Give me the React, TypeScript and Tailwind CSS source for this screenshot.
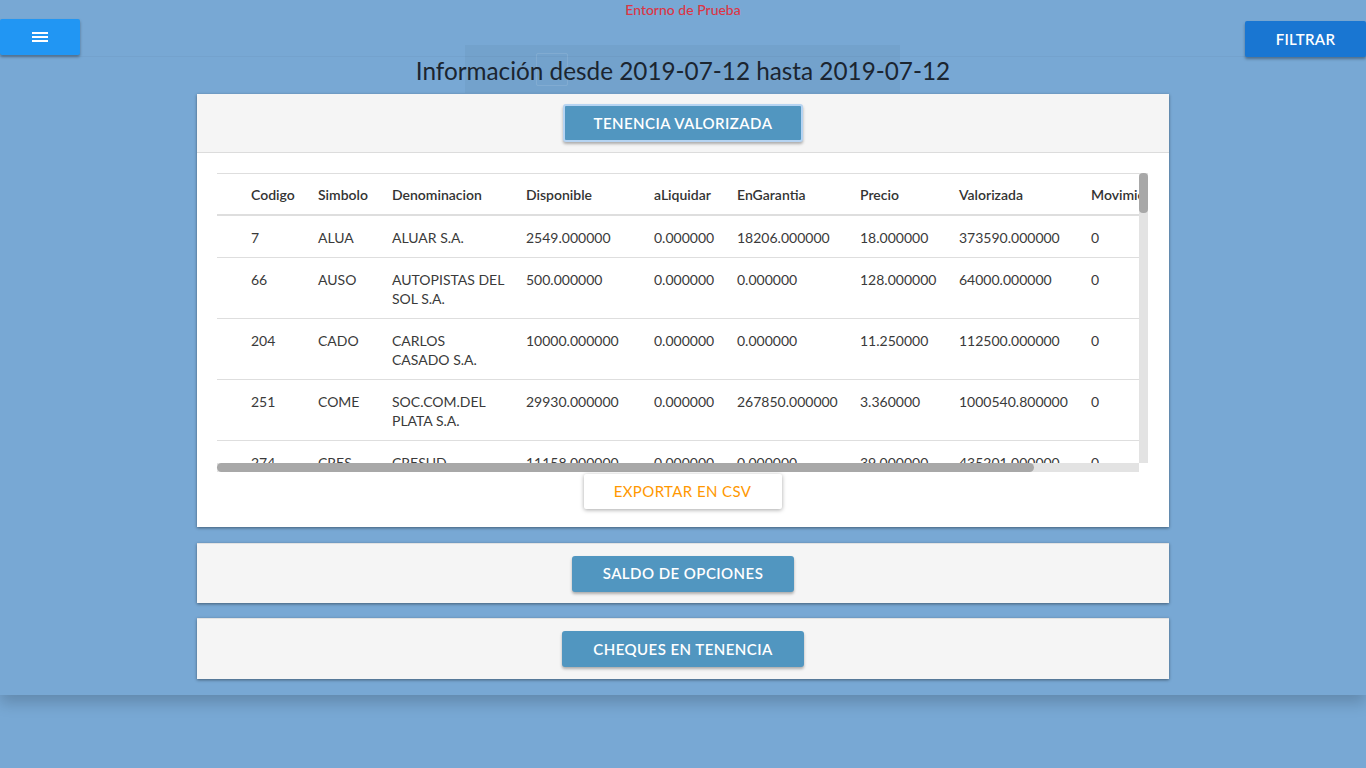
import React from "react";

type Row = {
  codigo: string;
  simbolo: string;
  denom: string[];
  disponible: string;
  aliq: string;
  garantia: string;
  precio: string;
  valorizada: string;
  mov: string;
};

const rows: Row[] = [
  { codigo: "7", simbolo: "ALUA", denom: ["ALUAR S.A."], disponible: "2549.000000", aliq: "0.000000", garantia: "18206.000000", precio: "18.000000", valorizada: "373590.000000", mov: "0" },
  { codigo: "66", simbolo: "AUSO", denom: ["AUTOPISTAS DEL", "SOL S.A."], disponible: "500.000000", aliq: "0.000000", garantia: "0.000000", precio: "128.000000", valorizada: "64000.000000", mov: "0" },
  { codigo: "204", simbolo: "CADO", denom: ["CARLOS", "CASADO S.A."], disponible: "10000.000000", aliq: "0.000000", garantia: "0.000000", precio: "11.250000", valorizada: "112500.000000", mov: "0" },
  { codigo: "251", simbolo: "COME", denom: ["SOC.COM.DEL", "PLATA S.A."], disponible: "29930.000000", aliq: "0.000000", garantia: "267850.000000", precio: "3.360000", valorizada: "1000540.800000", mov: "0" },
  { codigo: "274", simbolo: "CRES", denom: ["CRESUD"], disponible: "11158.000000", aliq: "0.000000", garantia: "0.000000", precio: "39.000000", valorizada: "435201.000000", mov: "0" },
  { codigo: "308", simbolo: "EDN", denom: ["EDENOR S.A."], disponible: "4200.000000", aliq: "0.000000", garantia: "0.000000", precio: "45.500000", valorizada: "191100.000000", mov: "0" },
];

const cols = [
  { key: "codigo", label: "Codigo", w: "w-[67px]" },
  { key: "simbolo", label: "Simbolo", w: "w-[74px]" },
  { key: "denom", label: "Denominacion", w: "w-[134px]" },
  { key: "disponible", label: "Disponible", w: "w-[128px]" },
  { key: "aliq", label: "aLiquidar", w: "w-[83px]" },
  { key: "garantia", label: "EnGarantia", w: "w-[123px]" },
  { key: "precio", label: "Precio", w: "w-[99px]" },
  { key: "valorizada", label: "Valorizada", w: "w-[132px]" },
  { key: "mov", label: "Movimientos", w: "w-[166px]" },
] as const;

function BlueButton({ children, focused }: { children: React.ReactNode; focused?: boolean }) {
  return (
    <button
      className={
        "px-[29px] rounded-[3px] bg-[#5196c0] text-white text-[15px] font-semibold tracking-[0.45px] shadow-[0_2px_3px_rgba(0,0,0,0.3)] " +
        (focused ? "h-[38px] border-2 border-[#b6d4f2]" : "h-[36px] border-2 border-transparent")
      }
    >
      {children}
    </button>
  );
}

const td = "pt-[12px] pb-[10px]";

export default function App() {
  return (
    <div className="min-h-screen bg-[#78a8d4] font-['Lato','Noto_Sans',sans-serif] text-[#333]">
      <div className="relative pb-[16px] shadow-[0_8px_14px_rgba(0,0,0,0.18)]">
        {/* faint overlay artifact behind the title */}
        <div className="absolute left-[465px] top-[45px] w-[435px] h-[48px] bg-black/[0.035] pointer-events-none">
          <div className="absolute left-[71px] top-[8px] w-[32px] h-[33px] border border-white/10 rounded-[2px]" />
        </div>

        {/* header */}
        <div className="grid grid-cols-[1fr_auto_1fr] h-[57px] border-b border-black/[0.03]">
          <div className="justify-self-start pt-[19px]">
            <button className="w-[80px] h-[36px] rounded-[2px] bg-[#2196f3] shadow-[0_2px_3px_rgba(0,0,0,0.35)] flex items-center justify-center">
              <svg width="16" height="10" viewBox="0 0 16 10">
                <rect x="0" y="0" width="16" height="2" fill="#fff" />
                <rect x="0" y="4" width="16" height="2" fill="#fff" />
                <rect x="0" y="8" width="16" height="2" fill="#fff" />
              </svg>
            </button>
          </div>
          <div className="pt-[1px] text-[14px] leading-[18px] font-medium text-[#dc3545]">Entorno de Prueba</div>
          <div className="justify-self-end pt-[21px]">
            <button className="w-[121px] h-[36px] rounded-[2px] bg-[#1976d2] text-white text-[15px] font-semibold tracking-[0.3px] shadow-[0_2px_3px_rgba(0,0,0,0.35)]">
              FILTRAR
            </button>
          </div>
        </div>

        {/* title */}
        <h1 className="relative -mt-[2px] text-center text-[24.3px] leading-[32px] text-[#1b2530]">
          Información desde 2019-07-12 hasta 2019-07-12
        </h1>

        {/* card 1 */}
        <div className="relative mt-[7px] w-[972px] mx-auto bg-white shadow-[0_1px_3px_rgba(0,0,0,0.45)]">
          <div className="h-[59px] bg-[#f5f5f5] border-b border-[#dcdcdc] flex items-center justify-center">
            <BlueButton focused>TENENCIA VALORIZADA</BlueButton>
          </div>
          <div className="pt-[20px] pl-[20px] pr-[21px] pb-[18px]">
            <div className="w-[931px]">
              <div className="flex h-[290px]">
                <div className="w-[922px] overflow-hidden">
                  <table className="w-[1040px] border-collapse table-fixed text-[14px] leading-[19px] border-t border-[#dedede]">
                    <thead>
                      <tr className="border-b-2 border-[#dedede]">
                        <th className="w-[34px]" />
                        {cols.map((c) => (
                          <th key={c.key} className={c.w + " text-left font-semibold text-[#333] pt-[11px] pb-[10px] pr-[16px] whitespace-nowrap"}>
                            {c.label}
                          </th>
                        ))}
                      </tr>
                    </thead>
                    <tbody className="text-[#3a3a3a]">
                      {rows.map((r) => (
                        <tr key={r.codigo} className="border-b border-[#dedede] align-top">
                          <td />
                          <td className={td}>{r.codigo}</td>
                          <td className={td}>{r.simbolo}</td>
                          <td className={td + " whitespace-nowrap"}>
                            {r.denom.map((l, i) => (
                              <div key={i}>{l}</div>
                            ))}
                          </td>
                          <td className={td}>{r.disponible}</td>
                          <td className={td}>{r.aliq}</td>
                          <td className={td}>{r.garantia}</td>
                          <td className={td}>{r.precio}</td>
                          <td className={td}>{r.valorizada}</td>
                          <td className={td}>{r.mov}</td>
                        </tr>
                      ))}
                    </tbody>
                  </table>
                </div>
                {/* vertical scrollbar */}
                <div className="w-[9px] bg-[#e3e3e3]">
                  <div className="h-[40px] rounded-[4px] bg-[#a8a8a8]" />
                </div>
              </div>
              {/* horizontal scrollbar */}
              <div className="flex">
                <div className="w-[922px] h-[9px] bg-[#e3e3e3]">
                  <div className="w-[817px] h-[9px] rounded-[5px] bg-[#a8a8a8]" />
                </div>
              </div>
            </div>
            <div className="mt-[2px] flex justify-center">
              <button className="w-[198px] h-[35px] bg-white text-[#ff9800] text-[15px] tracking-[0.4px] shadow-[0_1px_4px_rgba(0,0,0,0.35)] rounded-[2px]">
                EXPORTAR EN CSV
              </button>
            </div>
          </div>
        </div>

        {/* card 2 */}
        <div className="mt-[16px] w-[972px] mx-auto h-[60px] bg-[#f5f5f5] border-t border-[#e2e2e2] shadow-[0_1px_3px_rgba(0,0,0,0.45)] flex items-center justify-center">
          <BlueButton>SALDO DE OPCIONES</BlueButton>
        </div>

        {/* card 3 */}
        <div className="mt-[15px] w-[972px] mx-auto h-[61px] bg-[#f5f5f5] border-t border-[#e2e2e2] shadow-[0_1px_3px_rgba(0,0,0,0.45)] flex items-center justify-center">
          <BlueButton>CHEQUES EN TENENCIA</BlueButton>
        </div>
      </div>
    </div>
  );
}
